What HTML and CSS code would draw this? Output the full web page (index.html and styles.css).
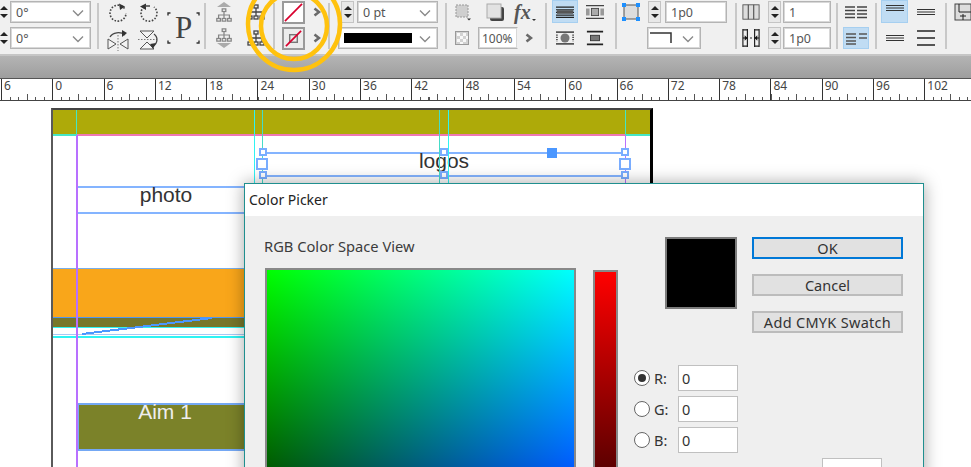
FILE: index.html
```html
<!DOCTYPE html>
<html lang="en">
<head>
    <meta charset="UTF-8">
    <meta name="viewport" content="width=device-width, initial-scale=1.0">
    <title>Color Picker</title>
    <link rel="stylesheet" href="styles.css">
</head>
<body>
    <svg class="defs" width="0" height="0">
        <symbol id="chev" viewBox="0 0 8 10"><path d="M1.500 1.500 6 5 1.500 8.500" fill="none" stroke="#6a6a6a" stroke-width="2.600"/></symbol>
        <symbol id="down" viewBox="0 0 12 8"><path d="M1 1.500 6 6.500 11 1.500" fill="none" stroke="#8a8a8a" stroke-width="1.400"/></symbol>
        <symbol id="org" viewBox="0 0 20 16" preserveAspectRatio="none"><g fill="none" stroke="#858585" stroke-width="1.400"><path d="M10 4V8M4 12V8H16V12M10 8V12"/><rect x="8" y="1" width="4" height="3"/><rect x="2" y="12" width="4" height="3"/><rect x="8" y="12" width="4" height="3"/><rect x="14" y="12" width="4" height="3"/></g></symbol>
        <symbol id="org-dark" viewBox="0 0 20 16" preserveAspectRatio="none"><g fill="none" stroke="#444" stroke-width="1.300"><path d="M10 4V8M4 12V8H16V12M10 8V12"/><rect x="8" y="1" width="4" height="3"/><rect x="2" y="12" width="4" height="3"/><rect x="8" y="12" width="4" height="3"/><rect x="14" y="12" width="4" height="3"/></g></symbol>
        <symbol id="lines" viewBox="0 0 22 14"><path d="M0 2H10M0 5.500H10M0 9H10M0 12.500H10M12 2H22M12 5.500H22M12 9H22M12 12.500H22" stroke="#444" stroke-width="1.400"/></symbol>
    </svg>

    <div class="toolbar">
        <div class="grp g-angle">
            <span class="spin"><i class="up"></i><i class="dn"></i></span>
            <span class="spin"><i class="up"></i><i class="dn"></i></span>
            <span class="field sel">0°<svg class="arr"><use href="#down"/></svg></span>
            <span class="field sel">0°<svg class="arr"><use href="#down"/></svg></span>
        </div>
        <span class="sep s1"></span>
        <div class="grp g-rotate">
            <svg class="ic" viewBox="0 0 22 22"><path d="M17.500 6.500A8 8 0 1 0 19 11" fill="none" stroke="#444" stroke-width="1.600" stroke-dasharray="1.600 1.600"/><path d="M12 1.500 18 4.500 13 8Z" fill="#333"/></svg>
            <svg class="ic" viewBox="0 0 22 22"><path d="M11 6V22" stroke="#777" stroke-dasharray="1.500 1.500"/><path d="M1 10V20L9 15Z M21 10V20L13 15Z" fill="#f4f4f4" stroke="#555"/><path d="M3 8A9 7 0 0 1 18 6" fill="none" stroke="#444" stroke-width="1.300"/><path d="M15 1 20 4 15 8Z" fill="#333"/></svg>
            <svg class="ic" viewBox="0 0 22 22"><path d="M7 5A8 8 0 1 0 17 5" fill="none" stroke="#444" stroke-width="1.600" stroke-dasharray="1.600 1.600"/><path d="M3 4.500 9 1.500 9 8Z" fill="#333"/><path d="M8 4H13" stroke="#444" stroke-width="1.500"/></svg>
            <svg class="ic" viewBox="0 0 22 22"><path d="M1 10.500H20" stroke="#777" stroke-dasharray="1.500 1.500"/><path d="M3 2H17L10 9Z M3 20H17L10 13Z" fill="#f4f4f4" stroke="#555"/><path d="M17 5A7 7 0 0 1 16 17" fill="none" stroke="#444" stroke-width="1.300"/><path d="M13 15 19 14 16 20Z" fill="#333"/></svg>
        </div>
        <div class="g-p">
            <span class="p-letter">P</span>
            <svg class="p-icon" viewBox="0 0 33 32"><path d="M1 3.500V1H3.500M29.500 1H32V3.500M1 28.500V31H3.500M29.500 31H32V28.500" fill="none" stroke="#333" stroke-width="1.400"/></svg>
        </div>
        <span class="sep s2"></span>
        <div class="grp g-org">
            <span class="ic-stack"><i class="tri-up"></i><svg class="ic-org"><use href="#org"/></svg></span>
            <span class="ic-stack"><svg class="ic-org"><use href="#org"/></svg><i class="tri-dn"></i></span>
            <svg class="ic-org"><use href="#org-dark"/></svg>
            <svg class="ic-org"><use href="#org-dark"/></svg>
        </div>
        <span class="sep s3"></span>
        <div class="grp g-swatch">
            <span class="swatch"><svg viewBox="0 0 20 20"><path d="M1 19 19 1" stroke="#d8002e" stroke-width="1.800"/></svg></span>
            <span class="swatch"><svg viewBox="0 0 20 20"><rect x="6" y="6" width="8" height="8" fill="none" stroke="#777" stroke-width="1.500"/><path d="M2 18 18 2" stroke="#d8002e" stroke-width="1.800"/></svg></span>
            <svg class="chev"><use href="#chev"/></svg>
            <svg class="chev"><use href="#chev"/></svg>
        </div>
        <span class="sep s4"></span>
        <div class="grp g-stroke">
            <span class="row weight">
                <span class="spin wide"><i class="up"></i><i class="dn"></i></span>
                <span class="field w-pt">0 pt<svg class="arr"><use href="#down"/></svg></span>
            </span>
            <span class="field w-stroke"><b class="stroke-black"></b><svg class="arr"><use href="#down"/></svg></span>
        </div>
        <span class="sep s5"></span>
        <div class="g-fx">
            <span class="row">
                <svg class="ic fx1" viewBox="0 0 18 18"><rect x="2" y="2" width="12" height="12" fill="#cfcfcf" stroke="#999" stroke-dasharray="2 1"/><path d="M13 15.500h4l-2 2Z" fill="#333"/></svg>
                <svg class="ic fx2" viewBox="0 0 18 18"><rect x="4" y="4" width="14" height="14" rx="2" fill="#444"/><rect x="1" y="1" width="14" height="14" fill="#e2e2e2" stroke="#aaa"/></svg>
                <span class="fx-label">fx</span>
                <i class="fx-tri"></i>
            </span>
            <span class="row fx-row">
                <svg class="ic fx4" viewBox="0 0 14 14"><rect x="0.500" y="0.500" width="13" height="13" fill="#d2d2d2" stroke="#999"/><path d="M2 2h3v3H2zM8 2h3v3H8zM5 5h3v3H5zM11 5h2v3h-2zM2 8h3v3H2zM8 8h3v3H8zM5 11h3v2H5z" fill="#f8f8f8"/></svg>
                <span class="field w-pct">100%</span>
                <svg class="chev"><use href="#chev"/></svg>
            </span>
        </div>
        <span class="sep s6"></span>
        <div class="grp g-wrap">
            <span class="on"><svg class="ic-wrap" viewBox="0 0 20 14"><path d="M0 1.500H20M0 4.500H20M0 7.500H20M0 10.500H20M0 13H20" stroke="#222" stroke-width="1.300"/><rect x="1" y="5" width="18" height="4" fill="#555"/></svg></span>
            <svg class="ic-wrap" viewBox="0 0 20 16"><path d="M0 1.500H20M0 14.500H20" stroke="#555" stroke-width="2"/><path d="M1 4V12M19 4V12" stroke="#555" stroke-width="2" stroke-dasharray="1.500 1"/><circle cx="10" cy="8" r="5" fill="#777"/></svg>
            <svg class="ic-wrap" viewBox="0 0 20 16"><path d="M0 1H20M0 15H20" stroke="#444" stroke-width="1.300"/><path d="M0 4V12H4V4ZM16 4V12H20V4Z" fill="#999"/><rect x="6" y="4" width="8" height="8" fill="#aaa" stroke="#444"/></svg>
            <svg class="ic-wrap" viewBox="0 0 20 16"><path d="M1 1H19M1 15H19" stroke="#222" stroke-width="2"/><rect x="5" y="5" width="10" height="6" fill="#777" stroke="#333"/></svg>
        </div>
        <span class="sep s7"></span>
        <div class="g-corner">
            <span class="row">
                <svg class="ic corner-ic" viewBox="0 0 18 18"><rect x="2" y="2" width="14" height="14" fill="#ddd" stroke="#555"/><path d="M0 0h4v4H0zM14 0h4v4h-4zM0 14h4v4H0zM14 14h4v4h-4z" fill="#1e90ff"/></svg>
                <span class="spin wide s-corner"><i class="up"></i><i class="dn"></i></span>
                <span class="field w-1p0">1p0</span>
            </span>
            <span class="row">
                <span class="field w-cor"><svg class="cor-ic" viewBox="0 0 22 12"><path d="M0 1H21V11" fill="none" stroke="#333" stroke-width="1.500"/></svg><svg class="arr"><use href="#down"/></svg></span>
            </span>
        </div>
        <span class="sep s8"></span>
        <div class="grp g-cols">
            <svg class="ic-col" viewBox="0 0 20 18"><rect x="1" y="1" width="18" height="16" fill="#ddd" stroke="#555"/><path d="M7 1V17M13 1V17" stroke="#555" stroke-width="1.300"/></svg>
            <svg class="ic-col" viewBox="0 0 20 20"><path d="M1 1H6M14 1H19M1 19H6M14 19H19M6 0V20M14 0V20M1 0V20M19 0V20" stroke="#222" stroke-width="1.300"/><path d="M1 10H6M14 10H19M9 10H11" stroke="#111" stroke-width="1.300"/><path d="M3 7 6 10 3 13ZM17 7 14 10 17 13Z" fill="#111"/></svg>
            <span class="spin wide"><i class="up"></i><i class="dn"></i></span>
            <span class="spin wide"><i class="up"></i><i class="dn"></i></span>
            <span class="field w-col">1</span>
            <span class="field w-col">1p0</span>
        </div>
        <span class="sep s9"></span>
        <div class="grp g-para">
            <svg class="ic-para"><use href="#lines"/></svg>
            <span class="on"><svg class="ic-para2" viewBox="0 0 22 14"><path d="M1 3H11M1 6.500H11M1 10H11M1 13H11" stroke="#555" stroke-width="1.300"/><path d="M14 3H22M14 7H22" stroke="#555" stroke-width="1.300"/></svg></span>
        </div>
        <span class="sep s10"></span>
        <div class="grp g-align">
            <span class="on"><svg class="ic-al" viewBox="0 0 18 8"><path d="M0 1.500H18M0 4H18M0 6.500H18" stroke="#333" stroke-width="1.200"/></svg></span>
            <svg class="ic-al" viewBox="0 0 18 8"><path d="M0 1.500H18M0 4H18M0 6.500H18" stroke="#333" stroke-width="1.200"/></svg>
            <svg class="ic-al" viewBox="0 0 18 8"><path d="M0 1.500H18M0 4H18M0 6.500H18" stroke="#333" stroke-width="1.200"/></svg>
            <svg class="ic-al tall" viewBox="0 0 18 16"><path d="M0 1H18M0 8H18M0 15H18" stroke="#222" stroke-width="1.500"/></svg>
        </div>
        <span class="sep s11"></span>
        <svg class="ic last-ic" viewBox="0 0 20 20"><rect x="2" y="2" width="16" height="16" fill="#ddd" stroke="#444"/><path d="M6 2V10H18M10 18V12M7 14H13" fill="none" stroke="#222"/></svg>
    </div>

    <div class="band"></div>

    <div class="ruler">
        <span class="tick tick-first">6</span>
        <span class="tick">0</span>
        <span class="tick">6</span>
        <span class="tick">12</span>
        <span class="tick">18</span>
        <span class="tick">24</span>
        <span class="tick">30</span>
        <span class="tick">36</span>
        <span class="tick">42</span>
        <span class="tick">48</span>
        <span class="tick">54</span>
        <span class="tick">60</span>
        <span class="tick">66</span>
        <span class="tick">72</span>
        <span class="tick">78</span>
        <span class="tick">84</span>
        <span class="tick">90</span>
        <span class="tick">96</span>
        <span class="tick">102</span>
    </div>

    <div class="canvas">
        <!-- document page, everything on it sits at its place on the pasteboard -->
        <div class="page"></div>
        <div class="head-band"></div>
        <div class="margin-l"></div>
        <div class="margin-r"></div>

        <div class="orange"></div>
        <div class="olive"></div>
        <div class="hline h1"></div>
        <div class="hline h2"></div>
        <div class="hline-blue"></div>
        <svg class="slant" viewBox="0 0 130 18"><path d="M0 17 130 1" stroke="#4b97ff" stroke-width="2" shape-rendering="crispEdges"/></svg>

        <div class="frame photo">photo</div>
        <div class="frame logos">logos</div>
        <div class="aim">Aim 1</div>

        <div class="guide g-purple g76"></div>
        <div class="guide g-cyan g254"></div>
        <div class="guide g-teal g262"></div>
        <div class="guide g-teal g439"></div>
        <div class="guide g-cyan g448"></div>
        <div class="guide g-purple g625"></div>
        <div class="guide-top gt76"></div>
        <div class="guide-top gt625"></div>

        <span class="hd h-a"></span>
        <span class="hd h-b"></span>
        <span class="hd h-c"></span>
        <span class="hd h-d"></span>
        <span class="hd h-e"></span>
        <span class="hd h-f"></span>
        <span class="hd big h-g"></span>
        <span class="hd big h-h"></span>
        <span class="hd solid h-i"></span>

        <div class="dialog">
            <div class="title">Color Picker</div>
            <div class="dialog-body">
                <div class="space">
                    <div class="space-label">RGB Color Space View</div>
                    <div class="space-field"></div>
                </div>
                <div class="hue"></div>
                <div class="controls">
                    <div class="top-row">
                        <div class="preview"></div>
                        <div class="buttons">
                            <button class="btn primary">OK</button>
                            <button class="btn">Cancel</button>
                            <button class="btn swatch-btn">Add CMYK Swatch</button>
                        </div>
                    </div>
                    <div class="value-row"><span class="radio checked"></span><label>R:</label><span class="val">0</span></div>
                    <div class="value-row"><span class="radio"></span><label>G:</label><span class="val">0</span></div>
                    <div class="value-row"><span class="radio"></span><label>B:</label><span class="val">0</span></div>
                    <div class="value-row cmyk"><label>C:</label><span class="val">0</span><label class="pct">%</label></div>
                </div>
            </div>
        </div>
    </div>

    <!-- the yellow hand drawn rings sit over the toolbar -->
    <svg class="rings" viewBox="0 0 110 80">
        <circle cx="55" cy="26" r="46" fill="none" stroke="#ffc20e" stroke-width="4.500"/>
        <circle cx="55" cy="28" r="33" fill="none" stroke="#ffc20e" stroke-width="4.500"/>
    </svg>
</body>
</html>
```

FILE: styles.css
```css
html, body {
    margin: 0;
    padding: 0;
    height: 467px;
    overflow: hidden;
}
body {
    position: relative;
    font-family: "Noto Sans", "Open Sans", sans-serif;
    font-size: 13px;
    color: #333;
    background: #fff;
}
.defs {
    position: absolute;
}

/* toolbar */
.toolbar {
    display: flex;
    align-items: flex-start;
    height: 54px;
    padding-top: 1px;
    box-sizing: border-box;
    background: #f0f0f0;
    overflow: hidden;
}
.toolbar > * {
    flex: none;
}
.grp {
    display: grid;
    grid-auto-flow: column;
    grid-template-rows: 22px 22px;
    row-gap: 4px;
    place-items: center;
}
.row {
    display: flex;
    align-items: center;
    height: 22px;
}
.sep {
    width: 2px;
    height: 46px;
    margin-top: 2px;
    background: #c8c8c8;
}
.s1 { margin-left: 6px; }
.s2 { margin-left: 4px; }
.s3 { margin-left: 1px; }
.s4 { margin-left: 1px; }
.s5 { margin-left: 7px; }
.s6 { margin-left: 5px; }
.s7 { margin-left: 3px; }
.s8 { margin-left: 8px; }
.s9 { margin-left: 5px; }
.s10 { margin-left: 6px; }
.s11 { margin-left: 1px; }

.field {
    position: relative;
    display: flex;
    align-items: center;
    box-sizing: border-box;
    height: 22px;
    padding-left: 5px;
    background: #fff;
    border: 1px solid #b4b4b4;
    outline: 1px solid #d8d8d8;
    outline-offset: -2px;
    color: #555;
    font-size: 12.500px;
}
.arr {
    position: absolute;
    right: 6px;
    top: 7px;
    width: 12px;
    height: 8px;
}
.spin {
    display: flex;
    flex-direction: column;
    justify-content: space-evenly;
    align-items: center;
    box-sizing: border-box;
    width: 7px;
    height: 22px;
    justify-self: start;
}
.spin.wide {
    width: 13px;
    background: #e8e8e8;
    border: 1px solid #c4c4c4;
}
.up, .dn {
    width: 0;
    height: 0;
    border-left: 4px solid transparent;
    border-right: 4px solid transparent;
}
.up { border-bottom: 4px solid #222; }
.dn { border-top: 4px solid #222; }

.ic {
    width: 22px;
    height: 22px;
}
.g-angle {
    grid-template-columns: 10px 81px;
}
.g-angle .field {
    width: 81px;
}
.g-rotate {
    margin-left: 5px;
    grid-template-columns: 28px 32px;
    grid-template-rows: 24px 24px;
    row-gap: 3px;
}
.g-p {
    position: relative;
    margin-left: 3px;
    margin-top: 11px;
    width: 33px;
    height: 32px;
    text-align: center;
}
.p-letter {
    display: block;
    font-family: "Liberation Serif", serif;
    font-size: 31px;
    line-height: 32px;
    color: #444;
}
.p-icon {
    position: absolute;
    left: 0;
    top: 0;
    width: 33px;
    height: 32px;
}
.g-org {
    margin-left: 2px;
    grid-template-columns: 32px 32px;
}
.ic-org {
    width: 20px;
    height: 16px;
}
.ic-stack {
    display: flex;
    flex-direction: column;
    align-items: center;
    gap: 1px;
}
.ic-stack .ic-org {
    width: 18px;
    height: 14px;
}
.tri-up, .tri-dn {
    width: 0;
    height: 0;
    border-left: 7px solid transparent;
    border-right: 7px solid transparent;
}
.tri-up { border-bottom: 5px solid #aaa; }
.tri-dn { border-top: 5px solid #aaa; }

.g-swatch {
    margin-left: 4px;
    grid-template-columns: 28px 20px;
}
.swatch {
    display: block;
    box-sizing: border-box;
    width: 23px;
    height: 23px;
    background: #fff;
    border: 2px solid #9a9a9a;
}
.g-swatch .swatch:last-of-type {
    background: #ececec;
}
.swatch svg {
    display: block;
    width: 19px;
    height: 19px;
}
.chev {
    width: 8px;
    height: 10px;
}
.g-stroke {
    margin-left: 8px;
    grid-template-columns: 100px;
}
.weight {
    width: 100px;
    padding-left: 3px;
    box-sizing: border-box;
}
.w-pt {
    width: 81px;
    margin-left: 3px;
}
.w-stroke {
    width: 100px;
    padding-left: 5px;
}
.stroke-black {
    display: block;
    width: 68px;
    height: 10px;
    background: #000;
}
.g-fx {
    display: flex;
    flex-direction: column;
    row-gap: 4px;
    margin-left: 2px;
    width: 91px;
}
.fx1 {
    width: 18px;
    height: 18px;
    margin-left: 5px;
}
.fx2 {
    width: 18px;
    height: 18px;
    margin-left: 14px;
}
.fx-label {
    margin-left: 10px;
    font-family: "Liberation Serif", serif;
    font-style: italic;
    font-weight: bold;
    font-size: 20px;
    line-height: 20px;
    color: #555;
}
.fx-tri {
    align-self: flex-end;
    width: 0;
    height: 0;
    margin: 0 0 2px 1px;
    border-left: 2px solid transparent;
    border-right: 2px solid transparent;
    border-top: 2px solid #333;
}
.fx4 {
    width: 14px;
    height: 14px;
    margin-left: 6px;
}
.w-pct {
    width: 40px;
    margin-left: 9px;
    padding-left: 3px;
    font-size: 12px;
    border-right-color: #f0f0f0;
}
.fx-row .chev {
    margin-left: 7px;
}
.g-wrap {
    margin-left: 5px;
    grid-template-columns: 26px 34px;
}
.on {
    display: flex;
    align-items: center;
    justify-content: center;
    box-sizing: border-box;
    width: 100%;
    height: 100%;
    background: #c0dcf3;
    border: 1px solid #a6cff0;
}
.g-wrap .on {
    height: 23px;
    margin-top: -1px;
}
.ic-wrap {
    width: 18px;
    height: 16px;
}
.g-corner {
    display: flex;
    flex-direction: column;
    row-gap: 4px;
    margin-left: 3px;
    width: 107px;
}
.corner-ic {
    width: 18px;
    height: 18px;
    margin-left: 2px;
}
.s-corner {
    margin-left: 8px;
}
.w-1p0 {
    width: 62px;
    margin-left: 4px;
}
.w-cor {
    width: 54px;
    margin-left: 27px;
    padding-left: 2px;
}
.cor-ic {
    width: 22px;
    height: 12px;
}
.g-cols {
    margin-left: 4px;
    grid-template-columns: 27px 15px 48px;
}
.ic-col {
    width: 18px;
    height: 20px;
    justify-self: start;
    margin-left: 1px;
}
.w-col {
    width: 48px;
}
.g-para {
    margin-left: 5px;
    grid-template-columns: 26px;
}
.ic-para {
    width: 22px;
    height: 14px;
}
.ic-para2 {
    width: 22px;
    height: 14px;
}
.g-align {
    margin-left: 4px;
    grid-template-columns: 27px 36px;
}
.g-align .on {
    height: 23px;
    margin-top: -1px;
    align-items: flex-start;
    padding-top: 3px;
}
.ic-al {
    width: 18px;
    height: 8px;
}
.ic-al.tall {
    height: 16px;
}
.last-ic {
    margin-left: 6px;
    width: 20px;
    height: 20px;
    margin-top: 1px;
}

/* grey strip under the toolbar */
.band {
    height: 25px;
    box-sizing: border-box;
    border-top: 2px solid #c6c6c6;
    border-bottom: 1px solid #555;
    background: linear-gradient(#b4b4b4, #9e9e9e);
}

/* ruler */
.ruler {
    display: flex;
    height: 22px;
    padding-left: 1px;
    box-sizing: border-box;
    background-color: #fff;
    border-bottom: 1px solid #444;
    background-image:
        repeating-linear-gradient(90deg, #555 0 1px, transparent 1px 8.550px),
        repeating-linear-gradient(90deg, #555 0 1px, transparent 1px 25.650px);
    background-size: 100% 3px, 100% 6px;
    background-position: 1px bottom, 1px bottom;
    background-repeat: no-repeat;
}
.tick {
    flex: none;
    width: 51.300px;
    box-sizing: border-box;
    padding-left: 2px;
    border-left: 1px solid #333;
    font-size: 12px;
    line-height: 14px;
    color: #444;
}

/* pasteboard, top edge is y=101 on screen */
.canvas {
    position: relative;
    height: 366px;
    overflow: hidden;
    background: #fff;
}
.page {
    position: absolute;
    left: 51px;
    top: 7px;
    width: 602px;
    height: 420px;
    box-sizing: border-box;
    border-top: 2px solid #444;
    border-left: 2px solid #5a5a5a;
    border-right: 3px solid #000;
}
.head-band {
    position: absolute;
    left: 53px;
    top: 9px;
    width: 597px;
    height: 24px;
    background: #aeaa09;
    border-bottom: 2px solid #ee78b4;
}
.margin-l, .margin-r {
    position: absolute;
    top: 33px;
    height: 2px;
    background: #45e6c4;
}
.margin-l { left: 53px; width: 24px; }
.margin-r { left: 626px; width: 24px; }

.orange {
    position: absolute;
    left: 53px;
    top: 167px;
    width: 240px;
    height: 48px;
    background: #f9a61a;
    border-top: 1px solid #79aeea;
    border-bottom: 2px solid #4f96f0;
}
.olive {
    position: absolute;
    left: 53px;
    top: 217px;
    width: 240px;
    height: 9px;
    background: #77772a;
}
.hline {
    position: absolute;
    left: 53px;
    width: 240px;
    height: 1px;
    background: #2ff3f3;
}
.h1 { top: 226px; }
.h2 { top: 235px; height: 2px; }
.hline-blue {
    position: absolute;
    left: 53px;
    top: 233px;
    width: 240px;
    height: 1px;
    background: #a8c8f4;
}
.slant {
    position: absolute;
    left: 82px;
    top: 216px;
    width: 130px;
    height: 18px;
}
.frame {
    position: absolute;
    box-sizing: border-box;
    border-top: 2px solid #84b4ff;
    border-bottom: 2px solid #84b4ff;
    font-family: "Liberation Sans", Arial, sans-serif;
    font-size: 21px;
    line-height: 14px;
    text-align: center;
    color: #333;
}
.photo {
    left: 77px;
    top: 85px;
    width: 178px;
    height: 28px;
}
.logos {
    left: 263px;
    top: 51px;
    width: 362px;
    height: 25px;
}
.aim {
    position: absolute;
    left: 77px;
    top: 302px;
    width: 220px;
    height: 48px;
    box-sizing: border-box;
    padding-right: 44px;
    background: #7b8229;
    border: 2px solid #74a8f4;
    font-family: "Liberation Sans", Arial, sans-serif;
    font-size: 21px;
    line-height: 14px;
    text-align: center;
    color: #eee;
}
.guide {
    position: absolute;
    top: 9px;
    width: 1px;
    height: 360px;
}
.g-purple { background: #b870ff; top: 34px; height: 335px; }
.g-cyan { background: #2ff3f3; }
.g-teal { background: #45dcc8; }
.g76 { left: 76px; width: 2px; }
.g254 { left: 254px; }
.g262 { left: 262px; }
.g439 { left: 439px; }
.g448 { left: 448px; }
.g625 { left: 625px; }
.guide-top {
    position: absolute;
    top: 9px;
    width: 1px;
    height: 25px;
    background: #45e6c4;
}
.gt76 { left: 76px; }
.gt625 { left: 625px; }

/* selection handles */
.hd {
    position: absolute;
    box-sizing: border-box;
    width: 8px;
    height: 8px;
    background: #fff;
    border: 2px solid #79adff;
}
.hd.big {
    width: 12px;
    height: 12px;
}
.hd.solid {
    width: 10px;
    height: 10px;
    background: #4b97ff;
    border-color: #4b97ff;
}
.h-a { left: 259px; top: 47px; }
.h-b { left: 259px; top: 70px; }
.h-c { left: 440px; top: 47px; }
.h-d { left: 440px; top: 70px; }
.h-e { left: 621px; top: 47px; }
.h-f { left: 621px; top: 70px; }
.h-g { left: 256px; top: 57px; }
.h-h { left: 619px; top: 57px; }
.h-i { left: 547px; top: 47px; }

/* dialog */
.dialog {
    position: absolute;
    left: 244px;
    top: 82px;
    width: 680px;
    height: 420px;
    box-sizing: border-box;
    border: 1px solid #1f8f8f;
    background: #efefef;
    box-shadow: 0 0 16px rgba(0, 0, 0, 0.35);
}
.title {
    height: 32px;
    padding-left: 4px;
    background: #fff;
    font-size: 14px;
    line-height: 31px;
    color: #222;
}
.dialog-body {
    display: flex;
    align-items: flex-start;
    padding-left: 19px;
}
.space {
    width: 311px;
}
.space-label {
    margin-top: 21px;
    height: 31px;
    font-size: 14.700px;
    line-height: 18px;
    color: #3c3c3c;
}
.space-field {
    box-sizing: border-box;
    width: 311px;
    height: 312px;
    margin-left: 1px;
    border: 2px solid #888;
    background-image: linear-gradient(to right, #000, #00f), linear-gradient(to top, #000, #0f0);
    background-blend-mode: screen;
}
.hue {
    box-sizing: border-box;
    width: 25px;
    height: 312px;
    margin: 54px 0 0 18px;
    border: 2px solid #888;
    background: linear-gradient(#f00, #000);
}
.controls {
    margin: 21px 0 0 16px;
}
.top-row {
    display: flex;
    padding-left: 31px;
    height: 96px;
    margin-bottom: 32px;
}
.preview {
    box-sizing: border-box;
    width: 72px;
    height: 72px;
    background: #000;
    border: 2px solid #7c7c7c;
}
.buttons {
    display: flex;
    flex-direction: column;
    row-gap: 15px;
    margin-left: 15px;
}
.btn {
    box-sizing: border-box;
    width: 151px;
    height: 22px;
    padding: 0;
    background: #e1e1e1;
    border: 2px solid #bcbcbc;
    font-family: inherit;
    font-size: 14.500px;
    line-height: 17px;
    color: #333;
}
.btn.primary {
    border-color: #0078d7;
}
.swatch-btn {
    letter-spacing: 0.300px;
}
.value-row {
    display: flex;
    align-items: center;
    height: 26px;
    margin-bottom: 5px;
}
.value-row label {
    width: 24px;
    font-size: 14.500px;
    margin-left: 4px;
}
.radio {
    position: relative;
    box-sizing: border-box;
    width: 16px;
    height: 16px;
    background: #fff;
    border: 1px solid #666;
    border-radius: 50%;
}
.radio.checked::after {
    content: "";
    position: absolute;
    left: 3px;
    top: 3px;
    width: 8px;
    height: 8px;
    background: #333;
    border-radius: 50%;
}
.val {
    box-sizing: border-box;
    width: 60px;
    height: 26px;
    padding-left: 3px;
    background: #fff;
    border: 1px solid #c0c0c0;
    font-size: 14.500px;
    line-height: 24px;
}
.cmyk {
    padding-left: 171px;
}
.cmyk label {
    width: 13px;
    margin-right: 0;
}
.cmyk .pct {
    margin-left: 8px;
}

/* rings drawn on the screenshot */
.rings {
    position: absolute;
    left: 239px;
    top: -2px;
    width: 110px;
    height: 80px;
}
```
